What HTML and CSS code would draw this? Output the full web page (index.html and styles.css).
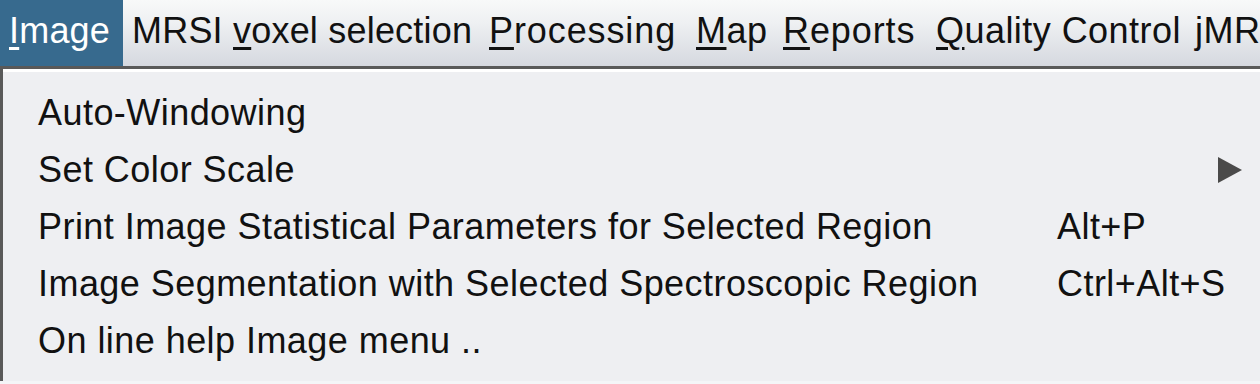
FILE: index.html
```html
<!DOCTYPE html>
<html>
<head>
<meta charset="utf-8">
<link rel="stylesheet" href="styles.css">
</head>
<body>
<div class="menubar">
  <div class="menu active m-image"><u>I</u>mage</div>
  <div class="menu m-mrsi">MRSI <u>v</u>oxel selection</div>
  <div class="menu m-proc"><u>P</u>rocessing</div>
  <div class="menu m-map"><u>M</u>ap</div>
  <div class="menu m-rep"><u>R</u>eports</div>
  <div class="menu m-qc"><u>Q</u>uality Control</div>
  <div class="menu m-jmrui"><u>j</u>MRUI</div>
</div>
<div class="popup">
  <div class="popup-inner">
    <div class="item"><span class="label">Auto-Windowing</span></div>
    <div class="item"><span class="label">Set Color Scale</span><span class="arrow"></span></div>
    <div class="item"><span class="label">Print Image Statistical Parameters for Selected Region</span><span class="accel">Alt+P</span></div>
    <div class="item"><span class="label">Image Segmentation with Selected Spectroscopic Region</span><span class="accel">Ctrl+Alt+S</span></div>
    <div class="item"><span class="label">On line help Image menu ..</span></div>
  </div>
</div>
</body>
</html>
```

FILE: styles.css
```css
html, body {
  margin: 0;
  padding: 0;
  background: #f4f5f7;
  overflow: hidden;
}
body {
  font-family: "Liberation Sans", Arial, sans-serif;
  font-size: 36px;
  letter-spacing: 0.45px;
  color: #000;
  width: 1260px;
  height: 384px;
}
.menubar {
  display: flex;
  height: 66px;
  background: linear-gradient(to bottom, #f8f9f9 0%, #eef0f2 35%, #d5d8df 100%);
  white-space: nowrap;
  overflow: hidden;
}
.menu {
  box-sizing: border-box;
  flex-shrink: 0;
  padding-left: 9px;
  line-height: 62px;
  height: 66px;
  color: #111;
}
.menu.active {
  background: #376a8e;
  color: #fff;
  letter-spacing: 0.2px;
}
.m-image { width: 123px; }
.m-mrsi { width: 357px; letter-spacing: 0.2px; }
.m-proc { width: 207px; letter-spacing: 0.9px; }
.m-map { width: 87px; }
.m-rep { width: 153px; letter-spacing: 0.9px; }
.m-qc { width: 259px; }
.m-jmrui { width: 120px; }
.menu u {
  text-decoration-thickness: 3px;
  text-underline-offset: 4px;
}
.popup {
  border-top: 3px solid #595959;
  border-left: 3px solid #595959;
  background: #eeeff2;
  height: 312px;
}
.popup-inner {
  border-top: 3px solid #ffffff;
  padding: 12px 0;
}
.item {
  display: flex;
  align-items: center;
  height: 57px;
  line-height: 57px;
  padding-left: 35px;
  white-space: nowrap;
  color: #111;
}
.label {
  flex-shrink: 0;
  width: 1019px;
}
.accel {
  flex-shrink: 0;
  color: #111;
}
.arrow {
  flex-shrink: 0;
  width: 0;
  height: 0;
  margin-left: 161px;
  border-top: 13px solid transparent;
  border-bottom: 13px solid transparent;
  border-left: 24px solid #4a4a4a;
}
```
